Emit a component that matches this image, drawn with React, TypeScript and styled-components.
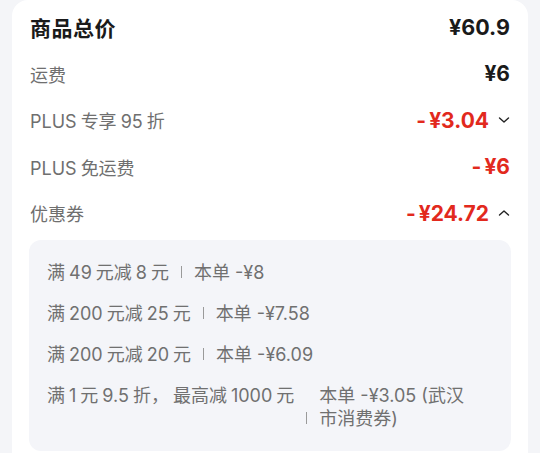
import React from "react";
import styled, { createGlobalStyle } from "styled-components";

const GlobalStyle = createGlobalStyle`
  html, body {
    margin: 0;
    padding: 0;
    background: #f4f5f8;
    font-family: Inter, "Noto Sans CJK SC", "Noto Sans", sans-serif;
  }
`;

const Page = styled.div`
  padding: 0 12px;
  height: 453px;
  overflow: hidden;
`;

const Card = styled.div`
  background: #ffffff;
  border-radius: 16px 16px 0 0;
  padding: 4px 18px 24px 18px;
`;

const Row = styled.div`
  display: flex;
  align-items: center;
  justify-content: space-between;
  height: 46.5px;
`;

const Label = styled.span<{ $main?: boolean }>`
  font-size: ${(p) => (p.$main ? "21px" : "18px")};
  font-weight: ${(p) => (p.$main ? 700 : 400)};
  color: ${(p) => (p.$main ? "#1a1a1a" : "#6f6f6f")};
  letter-spacing: ${(p) => (p.$main ? "0.5px" : "0")};
`;

const Num = styled.span<{ $after?: boolean }>`
  margin: ${(p) => (p.$after ? "0 4px 0 0" : "0 4px")};
`;

const ValueWrap = styled.div`
  display: flex;
  align-items: center;
  gap: 9px;
`;

const Value = styled.span<{ $red?: boolean; $big?: boolean }>`
  font-size: ${(p) => (p.$big ? "21.5px" : "21px")};
  font-weight: 700;
  color: ${(p) => (p.$red ? "#e2291d" : "#1a1a1a")};
`;

const Minus = styled.span`
  margin-right: 3px;
`;

const Comma = styled.span`
  margin-right: 4px;
`;

const Chevron = styled.svg`
  width: 12px;
  height: 8px;
  flex: none;
`;

const CouponBox = styled.div`
  background: #f4f5f9;
  border-radius: 12px;
  margin: 3.5px -1px 0 -1px;
  padding: 20.5px 34px 21.5px 18px;
  display: flex;
  flex-direction: column;
  gap: 18px;
`;

const CouponRow = styled.div`
  display: flex;
  align-items: flex-start;
  font-size: 18px;
  line-height: 23px;
  color: #707070;
`;

const Sep = styled.span<{ $bottom?: boolean }>`
  flex: none;
  width: 1px;
  height: 12px;
  background: #9a9a9a;
  margin: 0 12px;
  align-self: ${(p) => (p.$bottom ? "flex-end" : "center")};
  margin-bottom: ${(p) => (p.$bottom ? "6px" : "0")};
`;

const Left = styled.span`
  flex: none;
`;

const Right = styled.span`
  flex: 1;
`;

const Down = () => (
  <Chevron viewBox="0 0 12 8">
    <polyline points="1.5,2 6,6 10.5,2" fill="none" stroke="#222" strokeWidth="1.4" strokeLinecap="round" strokeLinejoin="round" />
  </Chevron>
);

const Up = () => (
  <Chevron viewBox="0 0 12 8">
    <polyline points="1.5,6 6,2 10.5,6" fill="none" stroke="#222" strokeWidth="1.4" strokeLinecap="round" strokeLinejoin="round" />
  </Chevron>
);

export default function App() {
  return (
    <Page>
      <GlobalStyle />
      <Card>
        <Row>
          <Label $main>商品总价</Label>
          <Value $big>¥60.9</Value>
        </Row>
        <Row>
          <Label>运费</Label>
          <Value>¥6</Value>
        </Row>
        <Row>
          <Label>
            <Num $after>PLUS</Num>专享<Num>95</Num>折
          </Label>
          <ValueWrap>
            <Value $red>
              <Minus>-</Minus>¥3.04
            </Value>
            <Down />
          </ValueWrap>
        </Row>
        <Row>
          <Label>
            <Num $after>PLUS</Num>免运费
          </Label>
          <Value $red>
            <Minus>-</Minus>¥6
          </Value>
        </Row>
        <Row>
          <Label>优惠券</Label>
          <ValueWrap>
            <Value $red>
              <Minus>-</Minus>¥24.72
            </Value>
            <Up />
          </ValueWrap>
        </Row>

        <CouponBox>
          <CouponRow>
            <Left>
              满<Num>49</Num>元减<Num>8</Num>元
            </Left>
            <Sep />
            <Right>本单 -¥8</Right>
          </CouponRow>
          <CouponRow>
            <Left>
              满<Num>200</Num>元减<Num>25</Num>元
            </Left>
            <Sep />
            <Right>本单 -¥7.58</Right>
          </CouponRow>
          <CouponRow>
            <Left>
              满<Num>200</Num>元减<Num>20</Num>元
            </Left>
            <Sep />
            <Right>本单 -¥6.09</Right>
          </CouponRow>
          <CouponRow>
            <Left>
              满<Num>1</Num>元<Num>9.5</Num>折<Comma>，</Comma>最高减<Num>1000</Num>元
            </Left>
            <Sep $bottom />
            <Right>本单 -¥3.05 (武汉市消费券)</Right>
          </CouponRow>
        </CouponBox>
      </Card>
    </Page>
  );
}
